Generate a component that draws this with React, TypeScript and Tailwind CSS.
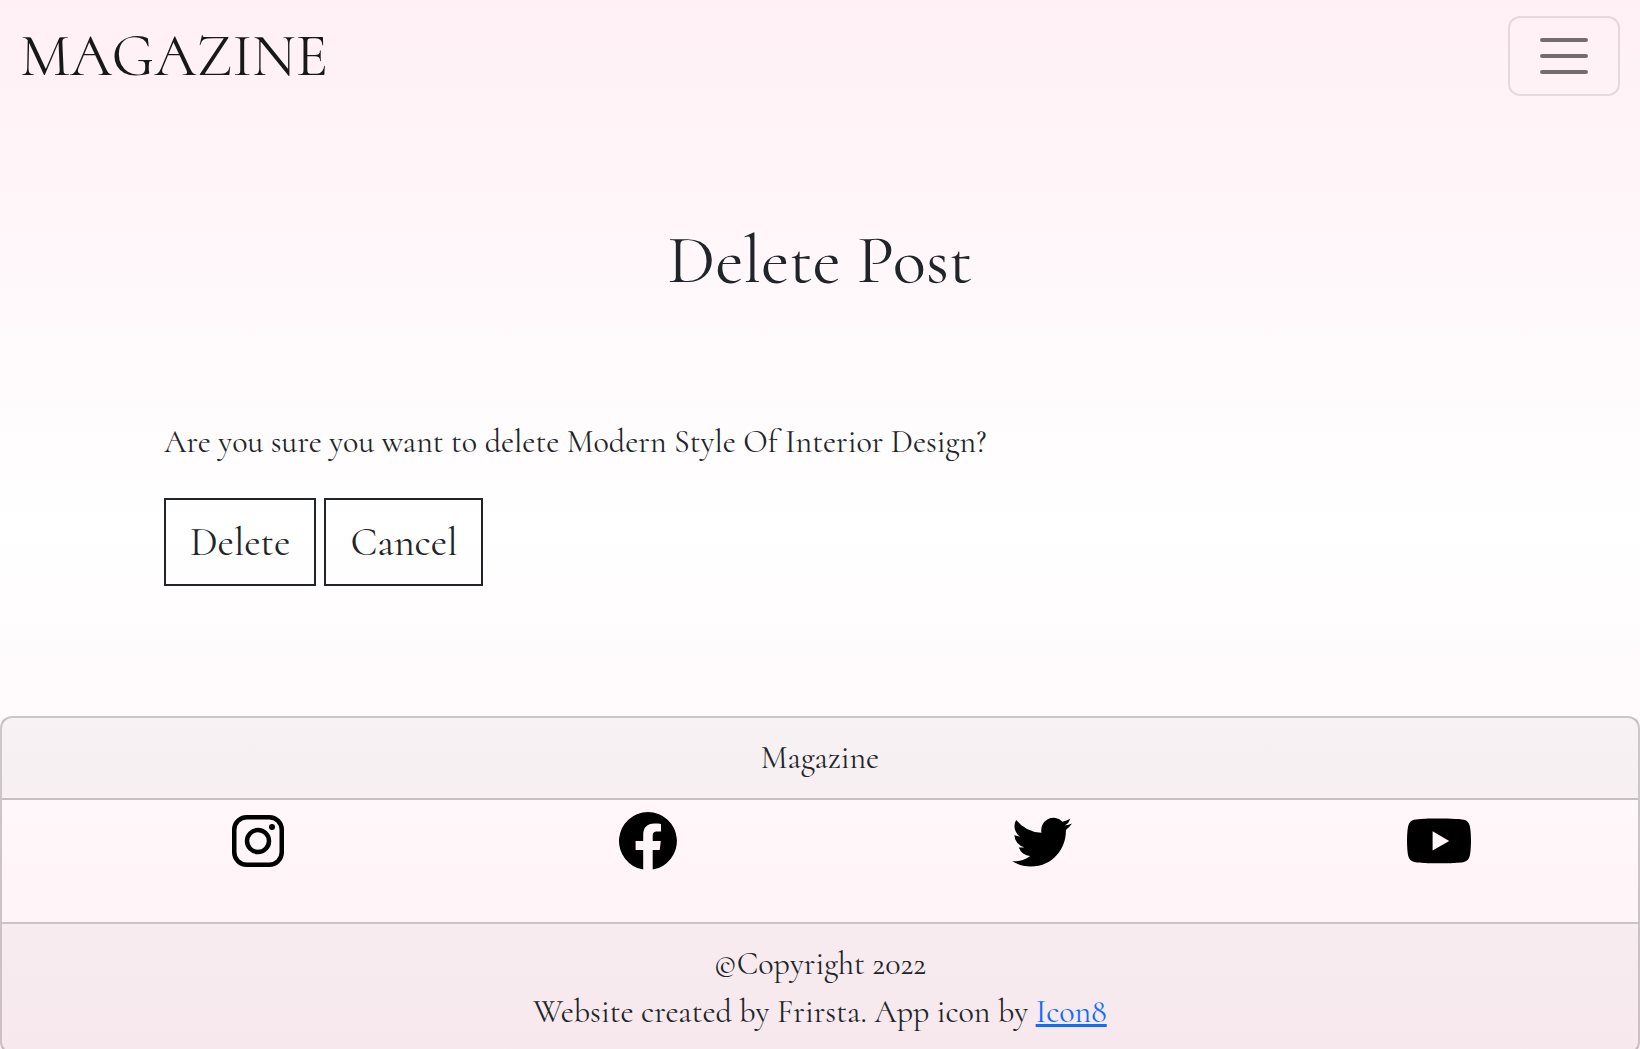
import React from "react";
import { BsTwitter, BsYoutube } from "react-icons/bs";

function InstagramIcon() {
  return (
    <svg viewBox="0 0 52 52" className="h-[52px] w-[52px]" fill="none" stroke="currentColor" strokeWidth="4.5" aria-hidden="true">
      <rect x="2.25" y="2.25" width="47.5" height="47.5" rx="12.5" />
      <circle cx="26" cy="26" r="11" />
      <circle cx="40" cy="12" r="3" fill="currentColor" stroke="none" />
    </svg>
  );
}

function FacebookIcon() {
  return (
    <svg viewBox="0 0 58 58" className="h-[58px] w-[58px]" fill="currentColor" aria-hidden="true">
      <path d="M29 0a29 29 0 0 0-4.8 57.6V38H16.6V29h7.6V23.4C24.2 15.5 28 11.6 35.500 11.6C38 11.6 40.5 11.7 42 12V19.5H38.5C34.5 19.5 33.7 21.3 33.7 23.8V29H41.8L40.7 38H33.7V57.6A29 29 0 0 0 29 0Z" />
    </svg>
  );
}

const socials = [
  { name: "Instagram", icon: <InstagramIcon /> },
  { name: "Facebook", icon: <FacebookIcon /> },
  { name: "Twitter", icon: <BsTwitter viewBox="0 0.2 16 16" className="h-[60px] w-[60px]" aria-hidden="true" /> },
  { name: "YouTube", icon: <BsYoutube viewBox="0 -0.35 16 16" className="h-16 w-16" aria-hidden="true" /> },
];

function ActionButton({ children }: { children: React.ReactNode }) {
  return (
    <button type="button" className="border-2 border-[#212529] px-6 py-3 text-[40px] leading-[60px]">
      {children}
    </button>
  );
}

export default function App() {
  return (
    <div className="flex min-h-screen flex-col bg-linear-to-b from-[#fff0f5] via-white to-[#fff0f5] font-['Cormorant','Cormorant_Garamond','Liberation_Serif',serif] text-[32px] leading-[48px] text-[#212529]">
      <nav className="flex items-center justify-between px-5 py-4">
        <a href="#" className="text-[60px] leading-[80px] text-black/90">
          MAGAZINE
        </a>
        <button
          type="button"
          aria-label="Toggle navigation"
          className="flex h-20 w-28 flex-col items-center justify-center gap-3 rounded-xl border-2 border-black/10"
        >
          <span className="h-1 w-12 rounded-full bg-black/55" />
          <span className="h-1 w-12 rounded-full bg-black/55" />
          <span className="h-1 w-12 rounded-full bg-black/55" />
        </button>
      </nav>

      <main className="px-[10%] pt-[108px] pb-[130px]">
        <h1 className="text-center text-[69px] leading-[80px]">Delete Post</h1>
        <p className="pt-[118px] pb-8">Are you sure you want to delete Modern Style Of Interior Design?</p>
        <div className="flex gap-2">
          <ActionButton>Delete</ActionButton>
          <ActionButton>Cancel</ActionButton>
        </div>
      </main>

      <footer className="rounded-xl border-2 border-black/20 text-center">
        <div className="border-b-2 border-black/20 bg-black/[0.03] py-4">Magazine</div>
        <ul className="flex h-[124px] items-start justify-around border-b-2 border-black/20 pt-[9px] pl-[62px]">
          {socials.map((s) => (
            <li key={s.name}>
              <a href="#" aria-label={s.name} className="flex h-16 items-center text-black">
                {s.icon}
              </a>
            </li>
          ))}
        </ul>
        <div className="bg-black/[0.03] py-4">
          <p>©Copyright 2022</p>
          <p>
            Website created by Frirsta. App icon by{" "}
            <a href="#" className="text-[#0d6efd] underline">
              Icon8
            </a>
          </p>
        </div>
      </footer>
    </div>
  );
}
